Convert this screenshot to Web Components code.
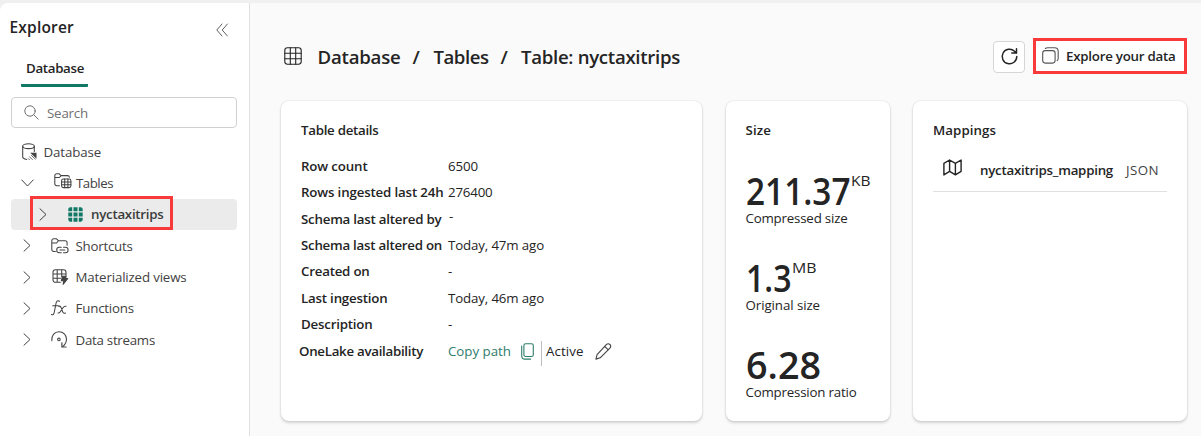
<!DOCTYPE html>
<html lang="en">
<head>
<meta charset="utf-8">
<title>Explorer</title>
<style>
html,body{margin:0;height:100%;overflow:hidden;background:#f0f0f0}
body{font-family:"Open Sans","Noto Sans",sans-serif;font-size:13.3px;color:#242424}
</style>
</head>
<body>
<database-app></database-app>
<script>
const ICONS = {
  collapse: ['0 0 12 14', '<path d="M6 1 .8 7 6 13M11.4 1 6.2 7l5.2 6"/>'],
  search: ['0 0 15 15', '<circle cx="6" cy="6" r="5.2"/><path d="m9.8 9.8 4.4 4.4"/>'],
  right: ['0 0 8 13', '<path d="m1 .8 6 5.7-6 5.7"/>'],
  down: ['0 0 13 8', '<path d="m.8 1 5.7 6 5.7-6"/>'],
  database: ['0 0 16 18', '<ellipse cx="6.5" cy="3.2" rx="5.8" ry="2.4"/><path d="M.7 3.2v10.6c0 1.400 1.500 2.300 4 2.600M12.300 3.200v5.300"/><path d="M8.200 9.700h6.300v6z" fill="currentColor" stroke="none"/><path d="m9.500 12.500 3.800 3.600M7.600 13.800l2.800 2.800M6.300 15.600l1.200 1.200" stroke-width=".8"/>'],
  tables: ['0 0 18 16', '<path d="M5.500 12.800H2.800c-1.200 0-2-.8-2-2V2.800c0-1.200.8-2 2-2h2.400l1.900 1.800h6.400c1.100 0 1.800.6 1.900 1.700M.9 4.500h4.500l1.800-1.900"/><rect x="7.600" y="6" width="9.300" height="8.600" rx="1.800"/><path d="M10.700 6v8.600M13.900 6v8.600M7.600 8.900h9.300M7.600 11.800h9.300"/>'],
  greengrid: ['0 0 15 15', '<g fill="currentColor" stroke="none"><path d="M2.4.3h1.800v3.900H.3V2.400C.3 1.200 1.200.3 2.400.3ZM5.500.3h4v3.900h-4ZM10.800.3h1.800c1.200 0 2.100.9 2.100 2.100v1.800h-3.900ZM.3 5.500h3.900v4H.3ZM5.500 5.500h4v4h-4ZM10.800 5.500h3.900v4h-3.900ZM.3 10.800h3.900v3.900H2.400c-1.200 0-2.100-.9-2.100-2.100ZM5.500 10.800h4v3.900h-4ZM10.800 10.800h3.900v1.800c0 1.200-.9 2.100-2.100 2.100h-1.800Z"/></g>'],
  shortcuts: ['0 0 18 16', '<path d="M4.400 13.400H2.800c-1.200 0-2-.8-2-2V2.800c0-1.200.8-2 2-2h2.700l1.900 1.900h6.700c1.200 0 2 .8 2 2v2.500M.9 5h4.700l1.800-2.300"/><path d="M10.300 9.300H8.400a2.700 2.700 0 0 0 0 5.400h1.900M12.500 9.300h1.900a2.700 2.700 0 0 1 0 5.400h-1.900M8.900 12h5"/>'],
  views: ['0 0 17 16', '<path d="M8.400 13.300H3.500C2 13.300 1 12.300 1 10.800V3.300C1 1.800 2 .8 3.500.8h8c1.500 0 2.500 1 2.500 2.500v3.200M5.200.8v12.500M9.700.8v7M1 5h13M1 9.300h7.500"/><path d="M10.600 7.200h3.600l-.7 2.300h2.300L11.100 15.300l.7-3.500H9.300z" fill="currentColor"/>'],
  fx: ['0 0 16 16', '<path d="M8.500 1.300C6.700.2 5.500 1 5.100 3L3.200 12.500c-.4 2-1.300 2.700-2.700 2M1.700 5.800h5.600M7.500 6.300c1.500-.5 2.300.2 2.900 1.800l1.200 3.500c.6 1.500 1.400 2.100 2.900 1.500M15 6.300c-1.200-.5-2 .1-3 1.500l-2.700 4c-.8 1.200-1.400 1.500-2.300 1.200"/>'],
  stream: ['0 0 17 17', '<path d="M.8 9.800C.2 4.800 3.500.8 8 .8c4.300 0 7.500 3.200 7.500 7.400 0 3-1.400 5.300-3.700 7.400"/><path d="M10.900 11.800v4.200h4.200" stroke-width="1.200"/><circle cx="7.900" cy="8.400" r="1.300"/>'],
  grid: ['0 0 18 18', '<rect x=".8" y=".8" width="16.400" height="16.400" rx="2.600"/><path d="M6.300.8v16.400M11.700.8v16.400M.8 6.300h16.400M.8 11.700h16.400"/>'],
  refresh: ['0 0 17 17', '<path d="M15.800 8.500a7.300 7.300 0 1 1-2.300-5.300l2 1.900M15.500.7v4.400h-4.700"/>'],
  layers: ['0 0 17 17', '<rect x=".7" y="3.600" width="12.400" height="12.500" rx="2.500"/><path d="M3.400 1.500C4 .9 4.600.7 5.500.7h7c2.300 0 3.700 1.400 3.700 3.700v6.800c0 1-.3 1.800-1 2.400"/>'],
  copy: ['0 0 13 17', '<rect x="2.900" y=".7" width="9.400" height="12.800" rx="1.800"/><path d="M.7 3v9.700c0 2 1.300 3.400 3.300 3.400h5.600"/>'],
  pencil: ['0 0 17 17', '<path d="M11.300 1.700c1.200-1.200 2.500-1.200 3.600-.2 1.100 1.100 1.100 2.500 0 3.600L5.200 14.800.9 16.100l1.200-4.500ZM9.700 3.300l3.600 3.600"/>'],
  map: ['0 0 19 17', '<path d="M.9 4.400 6.600 1l5.800 3.400L18.100 1v11.400l-5.700 3.500-5.800-3.500L.9 15.900ZM6.600 1v11.400M12.400 4.400v11.500"/>']
};

/* <ui-icon name stroke> : stroked glyph */
class UiIcon extends HTMLElement {
  connectedCallback() {
    const [box, art] = ICONS[this.getAttribute('name')];
    const [, , w, h] = box.split(' ');
    const sw = this.getAttribute('stroke') || 1;
    this.attachShadow({mode: 'open'}).innerHTML = `
      <style>:host{display:block;flex:none;width:${w}px;height:${h}px}svg{display:block;overflow:visible}</style>
      <svg width="${w}" height="${h}" viewBox="${box}" fill="none" stroke="currentColor" stroke-width="${sw}" stroke-linecap="round" stroke-linejoin="round">${art}</svg>`;
  }
}

/* <ui-text w> : one-line label fitted to its measure, by tracking or (condense) by glyph width */
class UiText extends HTMLElement {
  connectedCallback() {
    const w = +this.getAttribute('w');
    this.attachShadow({mode: 'open'}).innerHTML = `
      <style>:host{display:block;flex:none;white-space:nowrap;width:${w}px;line-height:20px}
      :host([semi]){font-weight:600}span{display:inline-block;transform-origin:0 50%}</style><span><slot></slot></span>`;
    const span = this.shadowRoot.querySelector('span');
    const natural = span.getBoundingClientRect().width;
    if (this.hasAttribute('condense')) span.style.transform = `scaleX(${(w / natural).toFixed(4)})`;
    else span.style.letterSpacing = ((w - natural) / this.textContent.length).toFixed(3) + 'px';
  }
}

class TreeRow extends HTMLElement {
  connectedCallback() {
    const a = n => this.getAttribute(n);
    this.attachShadow({mode: 'open'}).innerHTML = `
      <style>
      :host{display:grid;box-sizing:border-box;height:31.35px;margin:0 12px 0 11px;align-items:center;color:#424242;
        grid-template-columns:${a('cols')};border-radius:4px;position:relative}
      :host([selected]){background:#ebebeb;color:#3b3b3b}
      .green{color:#117865}
      .lift{margin-top:-4px}
      .mark{position:absolute;left:19px;top:-3px;width:137px;height:28px;border:3px solid #f93a3a}
      ui-text{color:inherit}
      </style>
      ${a('chev') ? `<ui-icon name="${a('chev')}"></ui-icon>` : '<i></i>'}
      <ui-icon name="${a('icon')}" stroke="1.050" class="${a('icon') === 'greengrid' ? 'green' : a('icon') === 'tables' ? 'lift' : ''}"></ui-icon>
      <ui-text w="${a('w')}" ${this.hasAttribute('selected') ? 'semi' : ''}>${a('label')}</ui-text>
      ${this.hasAttribute('selected') ? '<div class="mark"></div>' : ''}`;
  }
}

class ExplorerPanel extends HTMLElement {
  connectedCallback() {
    this.attachShadow({mode: 'open'}).innerHTML = `
      <style>
      :host{display:block;box-sizing:border-box;width:250px;background:#fff;border-right:1px solid #e0e0e0;border-top-left-radius:8px}
      header{display:flex;justify-content:space-between;padding:14px 21px 0 9.500px;height:36px}
      header ui-text{font-size:15.500px}
      header ui-icon{color:#616161;margin-top:6px}
      .tab{margin:5px 0 0 21px;width:67px;height:26px;border-bottom:3px solid #117865;border-radius:1px}
      .tab ui-text{margin-left:5px}
      .search{display:flex;align-items:center;gap:8px;margin:10px 12px 0 11px;padding-left:12px;height:29px;border:1px solid #d1d1d1;border-radius:4px;color:#707070}
      nav{margin-top:8px}
      </style>
      <header><ui-text semi w="64.500">Explorer</ui-text><ui-icon name="collapse"></ui-icon></header>
      <div class="tab"><ui-text semi w="58">Database</ui-text></div>
      <div class="search"><ui-icon name="search"></ui-icon><ui-text w="41">Search</ui-text></div>
      <nav>
        <tree-row cols="11px 21.500px auto" icon="database" label="Database" w="57.500"></tree-row>
        <tree-row cols="33px 22px auto" chev="down" icon="tables" label="Tables" w="37" style="padding-left:10px"></tree-row>
        <tree-row cols="29px 23px auto" chev="right" icon="greengrid" label="nyctaxitrips" w="72.500" selected style="padding-left:28px"></tree-row>
        <tree-row cols="28px 24.500px auto" chev="right" icon="shortcuts" label="Shortcuts" w="57" style="padding-left:12px"></tree-row>
        <tree-row cols="29px 23.500px auto" chev="right" icon="views" label="Materialized views" w="111" style="padding-left:12px"></tree-row>
        <tree-row cols="28px 24.500px auto" chev="right" icon="fx" label="Functions" w="58.500" style="padding-left:12px"></tree-row>
        <tree-row cols="28px 24.500px auto" chev="right" icon="stream" label="Data streams" w="79.500" style="padding-left:12px"></tree-row>
      </nav>`;
  }
}

class PageHeader extends HTMLElement {
  connectedCallback() {
    this.attachShadow({mode: 'open'}).innerHTML = `
      <style>
      :host{display:flex;align-items:center;height:38px;padding:34px 14px 0 34px}
      .crumb{display:flex;align-items:center;gap:12px;font-size:18.600px;margin:1px 0 0 15.500px;flex:1}
      .refresh{display:grid;place-items:center;box-sizing:border-box;width:32px;height:32px;background:#fff;border:1px solid #d6d6d6;border-radius:4px;margin:1px 8px 0 0}
      .explore{display:flex;align-items:center;gap:7px;box-sizing:border-box;width:154px;height:36px;border:3px solid #f93a3a;background:#fff;padding:1px 0 0 6px;margin-top:-1px}
      .explore ui-icon{color:#555;margin-top:-1px}
      </style>
      <ui-icon name="grid" stroke="1.100"></ui-icon>
      <div class="crumb"><ui-text semi w="83">Database</ui-text><ui-text semi w="9">/</ui-text><ui-text semi w="55">Tables</ui-text><ui-text semi w="8.500">/</ui-text><ui-text semi w="159">Table: nyctaxitrips</ui-text></div>
      <div class="refresh"><ui-icon name="refresh" stroke="1.500"></ui-icon></div>
      <div class="explore"><ui-icon name="layers" stroke="1.100"></ui-icon><ui-text semi w="109.500">Explore your data</ui-text></div>`;
  }
}

class InfoCard extends HTMLElement {
  connectedCallback() {
    this.attachShadow({mode: 'open'}).innerHTML = `
      <style>
      :host{display:block;box-sizing:border-box;height:320px;background:#fff;border-radius:8px;padding:19px 20px 0;
        box-shadow:0 0 2px rgba(0,0,0,.14),0 2px 3px rgba(0,0,0,.15)}
      </style>
      <slot name="title"></slot><slot></slot>`;
  }
}

class DetailRow extends HTMLElement {
  connectedCallback() {
    this.attachShadow({mode: 'open'}).innerHTML = `
      <style>:host{display:grid;grid-template-columns:147px auto;height:26.450px;align-items:center}
      div{display:flex;align-items:center}</style>
      <ui-text semi w="${this.getAttribute('w')}">${this.getAttribute('label')}</ui-text><div><slot></slot></div>`;
  }
}

class SizeStat extends HTMLElement {
  connectedCallback() {
    const a = n => this.getAttribute(n);
    this.attachShadow({mode: 'open'}).innerHTML = `
      <style>:host{display:block;height:87.300px}
      .value{display:flex;height:38px;font-size:38.500px}
      .value ui-text:first-child{margin-top:10px}
      .value .unit{font-size:15.200px;font-weight:500;margin:0 0 0 1px}
      .cap{margin-top:0}</style>
      <div class="value"><ui-text semi condense w="${a('vw')}">${a('value')}</ui-text>${a('unit') ? `<ui-text class="unit" condense w="${a('uw')}">${a('unit')}</ui-text>` : ''}</div>
      <ui-text class="cap" w="${a('cw')}">${a('caption')}</ui-text>`;
  }
}

class DatabaseApp extends HTMLElement {
  connectedCallback() {
    this.attachShadow({mode: 'open'}).innerHTML = `
      <style>
      :host{display:grid;grid-template-columns:250px 1fr;box-sizing:border-box;height:100vh;padding-top:3px;background:#f0f0f0}
      main{background:#fafafa}
      .cards{display:grid;grid-template-columns:421px 164px 274px;column-gap:23.500px;margin:26px 0 0 31px}
      .details{margin-top:12.500px}
      .link{color:#2f7d6b}
      .copy{color:#2f7d6b;margin-left:10px}
      .bar{width:1px;height:25px;background:#bdbdbd;margin:5px 4px 0 7px}
      .pen{margin-left:11px;color:#424242}
      .stats{margin-top:29.500px}
      .map{display:flex;align-items:center;height:41px;border-bottom:1px solid #e0e0e0;padding-left:10px;margin-top:10px}
      .map ui-icon{margin:-6px 18px 0 0}
      .map ui-text{margin-top:-2px}
      .map ui-text+ui-text{margin-left:13px;color:#424242}
      </style>
      <explorer-panel></explorer-panel>
      <main>
        <page-header></page-header>
        <div class="cards">
          <info-card>
            <ui-text slot="title" semi w="77.500">Table details</ui-text>
            <div class="details">
              <detail-row label="Row count" w="66.500"><ui-text w="30">6500</ui-text></detail-row>
              <detail-row label="Rows ingested last 24h" w="142.500"><ui-text w="44.500">276400</ui-text></detail-row>
              <detail-row label="Schema last altered by" w="140.500"><ui-text w="5" style="margin:-5px 0 0 1px">-</ui-text></detail-row>
              <detail-row label="Schema last altered on" w="141"><ui-text w="96">Today, 47m ago</ui-text></detail-row>
              <detail-row label="Created on" w="68.500"><ui-text w="5">-</ui-text></detail-row>
              <detail-row label="Last ingestion" w="86.500"><ui-text w="96">Today, 46m ago</ui-text></detail-row>
              <detail-row label="Description" w="71.500"><ui-text w="5">-</ui-text></detail-row>
              <detail-row label="OneLake availability" w="124" style="margin:-1.500px 0 0 -2px;grid-template-columns:149px auto"><ui-text class="link" w="63">Copy path</ui-text><ui-icon class="copy" name="copy" stroke="1.100"></ui-icon><div class="bar"></div><ui-text w="37.500">Active</ui-text><ui-icon class="pen" name="pencil" stroke="1.100"></ui-icon></detail-row>
            </div>
          </info-card>
          <info-card>
            <ui-text slot="title" semi w="25.500">Size</ui-text>
            <div class="stats">
              <size-stat value="211.37" vw="104.500" unit="KB" uw="19.500" caption="Compressed size" cw="102"></size-stat>
              <size-stat value="1.3" vw="45.500" unit="MB" uw="24.500" caption="Original size" cw="74.500"></size-stat>
              <size-stat value="6.28" vw="75" caption="Compression ratio" cw="111"></size-stat>
            </div>
          </info-card>
          <info-card>
            <ui-text slot="title" semi w="63">Mappings</ui-text>
            <div class="map"><ui-icon name="map" stroke="1.400"></ui-icon><ui-text semi w="133">nyctaxitrips_mapping</ui-text><ui-text w="33">JSON</ui-text></div>
          </info-card>
        </div>
      </main>`;
  }
}

customElements.define('ui-icon', UiIcon);
customElements.define('ui-text', UiText);
customElements.define('tree-row', TreeRow);
customElements.define('explorer-panel', ExplorerPanel);
customElements.define('page-header', PageHeader);
customElements.define('info-card', InfoCard);
customElements.define('detail-row', DetailRow);
customElements.define('size-stat', SizeStat);
customElements.define('database-app', DatabaseApp);
</script>
</body>
</html>
